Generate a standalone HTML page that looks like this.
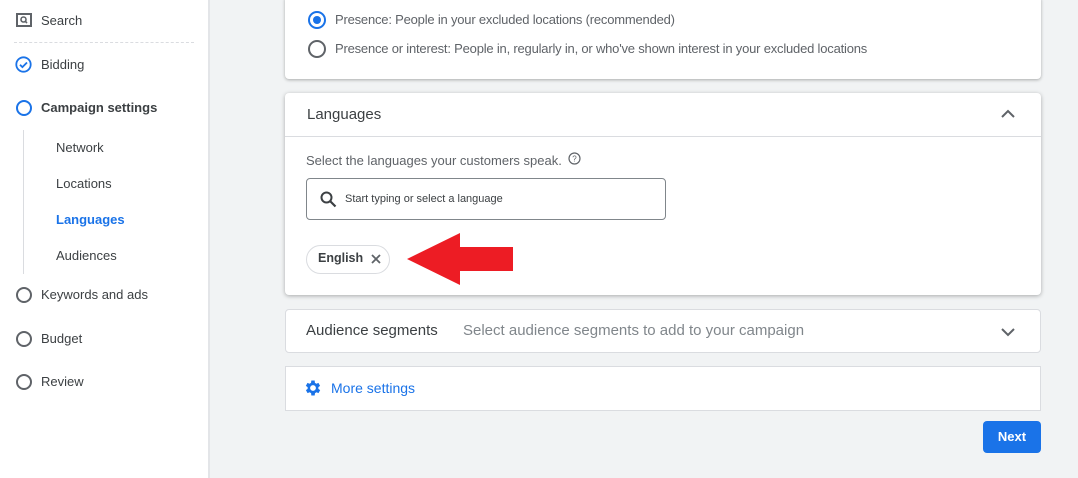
<!DOCTYPE html>
<html><head><style>
*{margin:0;padding:0;box-sizing:border-box}
body{width:1078px;height:478px;overflow:hidden;background:#f1f3f4;font-family:"Liberation Sans",Arial,sans-serif;position:relative;color:#3c4043}
.a{position:absolute}
.side{left:0;top:0;width:210px;height:478px;background:#fff;border-right:2px solid #e3e5e8}
.t{font-size:13px;color:#3c4043;white-space:nowrap}
.circ{width:16px;height:16px;border:2px solid #5f6368;border-radius:50%}
.card{background:#fff;border-radius:4px}
</style></head><body>
<div class="a side"></div>
<svg class="a" style="left:16px;top:13px" width="16" height="14" viewBox="0 0 16 14"><rect x="1" y="1" width="14" height="12" fill="none" stroke="#5f6368" stroke-width="2"/><circle cx="7.5" cy="6.5" r="2.5" fill="none" stroke="#5f6368" stroke-width="1.6"/><line x1="9.3" y1="8.3" x2="11" y2="10" stroke="#5f6368" stroke-width="1.6"/></svg>
<div class="a t" style="left:41px;top:13px">Search</div>
<div class="a" style="left:14px;top:42px;width:180px;border-top:1px dashed #dadce0"></div>
<svg class="a" style="left:15px;top:56px" width="17" height="17" viewBox="0 0 17 17"><circle cx="8.5" cy="8.5" r="7.2" fill="none" stroke="#1a73e8" stroke-width="1.8"/><path d="M5 8.7l2.4 2.4 4.6-4.6" fill="none" stroke="#1a73e8" stroke-width="1.8"/></svg>
<div class="a t" style="left:41px;top:57px">Bidding</div>
<div class="a circ" style="left:16px;top:100px;border-color:#1a73e8"></div>
<div class="a t" style="left:41px;top:100px;font-weight:bold">Campaign settings</div>
<div class="a" style="left:23px;top:130px;height:144px;border-left:1px solid #dadce0"></div>
<div class="a t" style="left:56px;top:140px">Network</div>
<div class="a t" style="left:56px;top:176px">Locations</div>
<div class="a t" style="left:56px;top:212px;color:#1a73e8;font-weight:bold">Languages</div>
<div class="a t" style="left:56px;top:248px">Audiences</div>
<div class="a circ" style="left:16px;top:287px"></div>
<div class="a t" style="left:41px;top:287px">Keywords and ads</div>
<div class="a circ" style="left:16px;top:331px"></div>
<div class="a t" style="left:41px;top:331px">Budget</div>
<div class="a circ" style="left:16px;top:374px"></div>
<div class="a t" style="left:41px;top:374px">Review</div>

<div class="a card" style="left:285px;top:-4px;width:756px;height:83px;box-shadow:0 1px 3px rgba(0,0,0,.3)"></div>
<div class="a" style="left:308px;top:11px;width:18px;height:18px;border:2px solid #1a73e8;border-radius:50%"><div style="margin:3px;width:8px;height:8px;border-radius:50%;background:#1a73e8"></div></div>
<div class="a t" style="left:335px;top:12px;color:#5f6368;letter-spacing:-0.2px">Presence: People in your excluded locations (recommended)</div>
<div class="a" style="left:308px;top:40px;width:18px;height:18px;border:2px solid #5f6368;border-radius:50%"></div>
<div class="a t" style="left:335px;top:41px;color:#5f6368;letter-spacing:-0.2px">Presence or interest: People in, regularly in, or who've shown interest in your excluded locations</div>

<div class="a card" style="left:285px;top:93px;width:756px;height:202px;box-shadow:0 1px 4px rgba(0,0,0,.3)"></div>
<div class="a" style="left:285px;top:136px;width:756px;border-top:1px solid #dadce0"></div>
<div class="a" style="left:307px;top:106px;font-size:15px;color:#3c4043">Languages</div>
<svg class="a" style="left:1000px;top:108px" width="16" height="12" viewBox="0 0 16 12"><path d="M2 9l6-6 6 6" fill="none" stroke="#5f6368" stroke-width="2"/></svg>
<div class="a t" style="left:306px;top:153px;color:#5f6368">Select the languages your customers speak.</div>
<svg class="a" style="left:568px;top:152px" width="13" height="13" viewBox="0 0 13 13"><circle cx="6.5" cy="6.5" r="5.5" fill="none" stroke="#5f6368" stroke-width="1.2"/><text x="6.5" y="9.5" font-size="8" text-anchor="middle" fill="#5f6368" font-family="Liberation Sans">?</text></svg>
<div class="a" style="left:306px;top:178px;width:360px;height:42px;border:1px solid #80868b;border-radius:4px"></div>
<svg class="a" style="left:320px;top:191px" width="17" height="17" viewBox="0 0 17 17"><circle cx="6.5" cy="6.5" r="5" fill="none" stroke="#3c4043" stroke-width="2"/><line x1="10" y1="10" x2="15.5" y2="15.5" stroke="#3c4043" stroke-width="2.2"/></svg>
<div class="a" style="left:345px;top:193px;font-size:11px;color:#3c4043">Start typing or select a language</div>
<div class="a" style="left:306px;top:245px;width:84px;height:29px;border:1px solid #dadce0;border-radius:15px"></div>
<div class="a t" style="left:318px;top:251px;font-weight:bold;color:#3c4043;font-size:12.5px">English</div>
<svg class="a" style="left:370px;top:253px" width="12" height="12" viewBox="0 0 12 12"><path d="M2 2l8 8M10 2l-8 8" stroke="#5f6368" stroke-width="1.8"/></svg>
<svg class="a" style="left:405px;top:233px" width="110" height="52" viewBox="0 0 110 52"><polygon points="2,26 55,0 55,14 108,14 108,38 55,38 55,52" fill="#ed1c24"/></svg>

<div class="a card" style="left:285px;top:309px;width:756px;height:44px;border:1px solid #dadce0"></div>
<div class="a" style="left:306px;top:322px;font-size:15px;color:#3c4043;white-space:nowrap">Audience segments</div>
<div class="a" style="left:463px;top:322px;font-size:15px;color:#80868b;white-space:nowrap">Select audience segments to add to your campaign</div>
<svg class="a" style="left:1000px;top:326px" width="16" height="12" viewBox="0 0 16 12"><path d="M2 3l6 6 6-6" fill="none" stroke="#5f6368" stroke-width="2"/></svg>

<div class="a" style="left:285px;top:366px;width:756px;height:45px;background:#fff;border:1px solid #dadce0"></div>
<svg class="a" style="left:303px;top:378px" width="20" height="20" viewBox="0 0 24 24"><path fill="#1a73e8" d="M19.4 13a7.5 7.5 0 000-2l2.1-1.6-2-3.5-2.5 1a7.3 7.3 0 00-1.7-1L15 3h-4l-.4 2.9a7.3 7.3 0 00-1.7 1l-2.5-1-2 3.5L6.6 11a7.5 7.5 0 000 2l-2.1 1.6 2 3.5 2.5-1c.5.4 1.1.8 1.7 1L11 21h4l.4-2.9c.6-.2 1.2-.6 1.7-1l2.5 1 2-3.5zM13 15.5a3.5 3.5 0 110-7 3.5 3.5 0 010 7z" transform="translate(-1 0)"/></svg>
<div class="a" style="left:331px;top:380px;font-size:14px;color:#1a73e8">More settings</div>

<div class="a" style="left:983px;top:421px;width:58px;height:32px;background:#1a73e8;border-radius:4px;color:#fff;font-size:13px;font-weight:bold;text-align:center;line-height:32px">Next</div>
</body></html>
